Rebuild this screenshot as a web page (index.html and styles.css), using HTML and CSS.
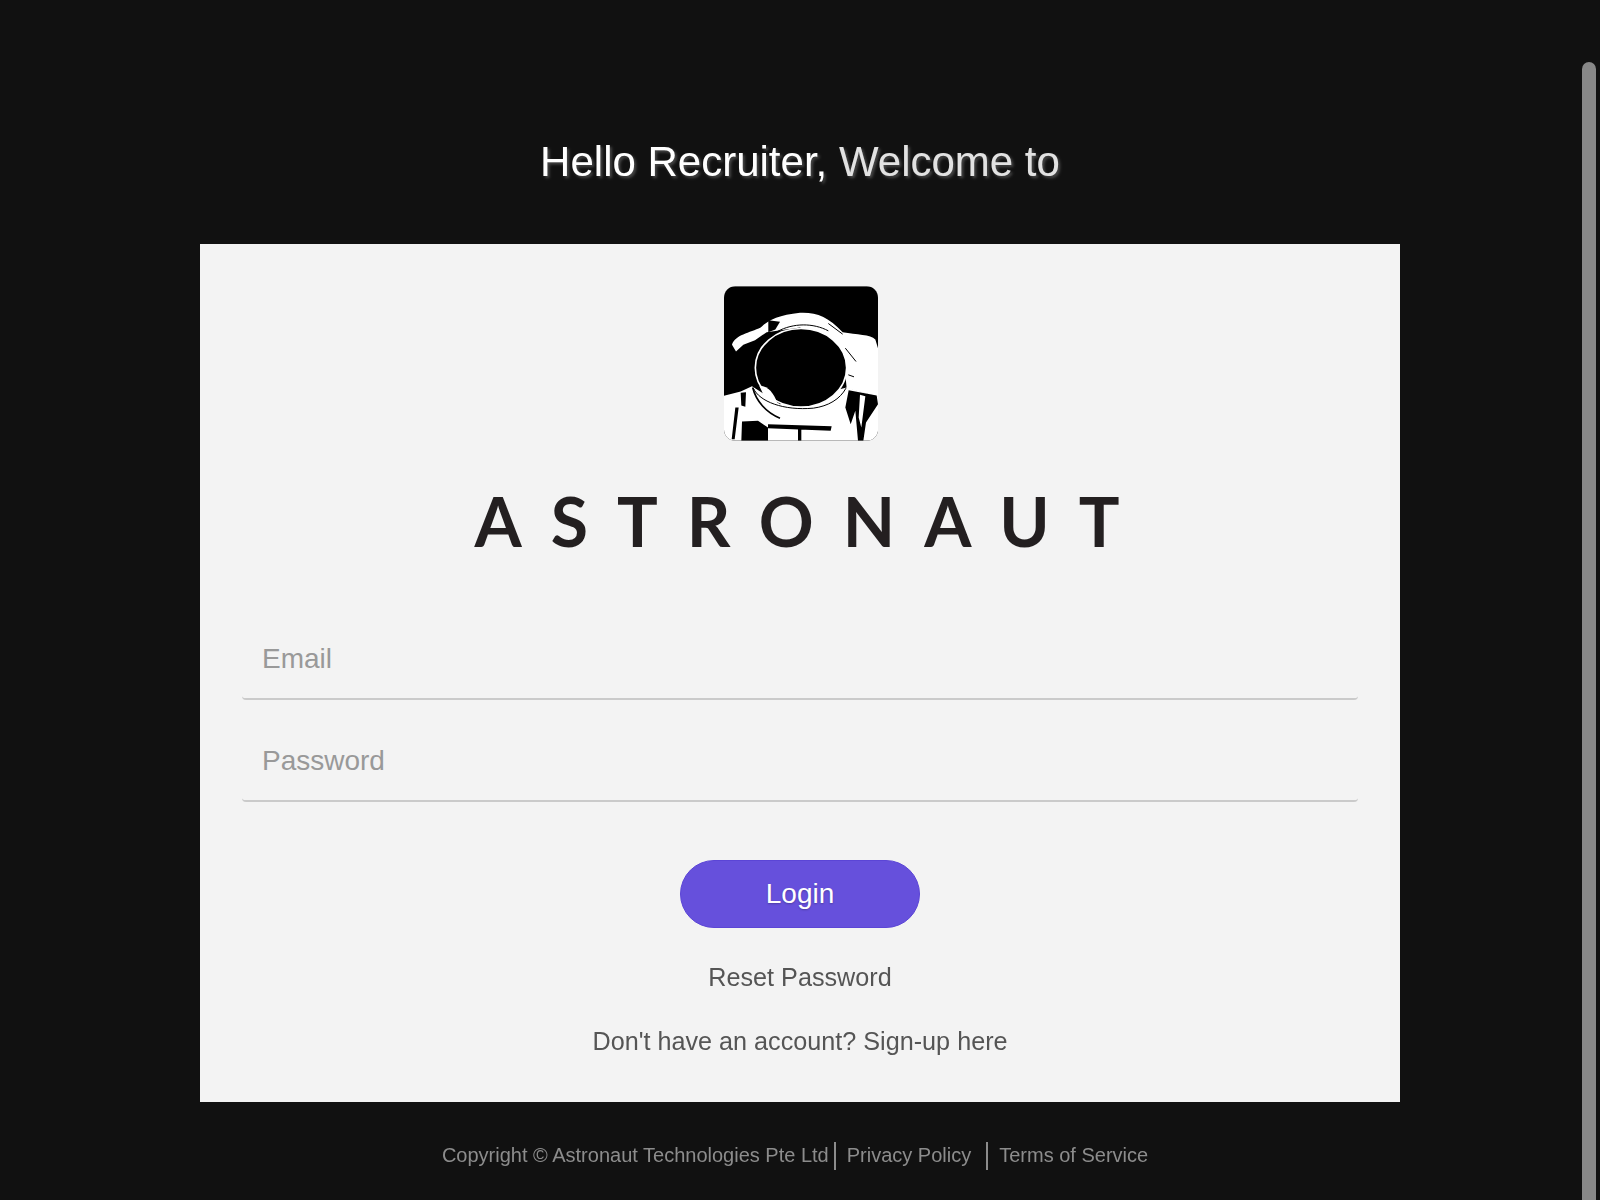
FILE: index.html
```html
<!DOCTYPE html>
<html lang="en">
<head>
<meta charset="utf-8">
<title>Astronaut Login</title>
<link rel="stylesheet" href="styles.css">
</head>
<body>
<main class="page">
  <h1 class="greeting"><span class="greeting-name">Hello Recruiter,</span> <span class="greeting-welcome">Welcome to</span></h1>
  <section class="card">
    <svg class="logo" viewBox="72 46 462 464" aria-label="Astronaut logo">
      <defs><clipPath id="logoClip"><rect x="72" y="46" width="462" height="464" rx="34"/></clipPath></defs>
      <g clip-path="url(#logoClip)">
        <rect x="72" y="46" width="462" height="464" fill="#000"/>
        <path fill="#fff" d="M96 222C104 192 150 186 182 170C208 146 240 132 300 126C350 124 384 138 428 184C470 192 512 190 526 206L534 232V378L500 368L440 352L430 250L300 170L200 184L165 208L130 222L108 242Z"/>
        <path fill="#fff" d="M72 375L122 362L156 346L240 400L440 350L534 376V510H72Z"/>
        <path fill="#000" d="M205 148L240 153L226 176L205 184Z"/>
        <ellipse cx="303" cy="291" rx="137" ry="118" fill="#000" stroke="#fff" stroke-width="5"/>
        <path fill="none" stroke="#000" stroke-width="3" d="M232 182C280 156 340 156 385 180M385 158L428 190M436 232L468 272M160 352C178 392 250 420 340 412C385 406 420 385 438 352M445 312L462 318"/>
        <path fill="#fff" d="M178 345C205 345 222 368 232 398L190 372Z"/>
        <path fill="none" stroke="#000" stroke-width="5" d="M158 350C168 390 198 425 240 442"/>
        <path fill="#000" d="M204 460L395 466L392 480L204 472ZM126 452L174 450L204 470V510H124ZM106 410L116 410L104 505L95 505ZM122 366L138 364L136 408L124 404ZM294 476H304V510H294ZM446 358L530 374L534 400L498 455L490 510H474L466 420L452 460L436 410Z"/>
        <path fill="#fff" d="M480 372L496 376L484 470L476 440ZM534 430V450L506 498L500 490ZM534 466V480L516 504L510 498Z"/>
      </g>
    </svg>
    <div class="wordmark">ASTRONAUT</div>
    <form class="login-form">
      <input class="field" type="email" placeholder="Email">
      <input class="field" type="password" placeholder="Password">
      <button class="login-button" type="button">Login</button>
    </form>
    <a class="card-link reset-link">Reset Password</a>
    <a class="card-link signup-link">Don't have an account? Sign-up here</a>
  </section>
  <footer class="footer">
    <span class="footer-item copyright">Copyright © Astronaut Technologies Pte Ltd</span>
    <a class="footer-item privacy">Privacy Policy</a>
    <a class="footer-item terms">Terms of Service</a>
  </footer>
</main>
<div class="scroll-thumb"></div>
</body>
</html>
```
FILE: styles.css
```css
* { box-sizing: border-box; }
html, body { margin: 0; height: 100%; overflow: hidden; }
body {
  background: #111;
  font-family: "Liberation Sans", Arial, sans-serif;
}
.page {
  display: flex;
  flex-direction: column;
  align-items: center;
  padding-top: 136px;
}
.greeting {
  margin: 0;
  height: 108px;
  font-size: 42px;
  line-height: 52px;
  font-weight: 400;
  text-shadow: 2px 2px 3px rgba(120,120,120,.55);
  filter: grayscale(1);
}
.greeting-name { color: #fff; }
.greeting-welcome { color: #e2e2e2; }
.card {
  width: 1200px;
  height: 858px;
  background: #f3f3f3;
  padding: 42px 42px 0;
  display: flex;
  flex-direction: column;
  align-items: center;
}
.logo { display: block; width: 154px; height: 155px; flex: none; margin-left: 2px; filter: blur(.4px); }
.wordmark {
  margin-top: 36px;
  height: 88px;
  font-family: Lato, "Liberation Sans", sans-serif;
  font-weight: 700;
  font-size: 68px;
  line-height: 88px;
  letter-spacing: 29px;
  margin-right: -23px;
  color: #231f20;
  filter: blur(.7px);
  white-space: nowrap;
}
.login-form {
  width: 100%;
  margin-top: 65px;
  display: flex;
  flex-direction: column;
  align-items: center;
  gap: 32px;
}
.field {
  width: 100%;
  height: 70px;
  border: 0;
  border-bottom: 2px solid #cacaca;
  border-radius: 0 0 4px 4px;
  background: transparent;
  padding: 0 20px 10px;
  font: 28px "Liberation Sans", Arial, sans-serif;
  outline: none;
}
.field::placeholder { color: #999; opacity: 1; }
.login-button {
  width: 240px;
  height: 68px;
  margin-top: 26px;
  border: 1px solid #5b45d6;
  border-radius: 34px;
  background: #6650dc;
  color: #fff;
  font: 28px "Liberation Sans", Arial, sans-serif;
  text-shadow: 0 1px 2px rgba(0,0,0,.25);
}
.card-link {
  color: #555;
  font-size: 25.2px;
  line-height: 32px;
  filter: grayscale(1);
}
.reset-link { margin-top: 33px; }
.signup-link { margin-top: 32px; }
.footer {
  margin-top: 40px;
  margin-right: 10px;
  display: flex;
  align-items: center;
  color: #8c8c8c;
  font-size: 20px;
  line-height: 26px;
  filter: grayscale(1);
}
.footer-item { padding: 0 11px 2px; }
.copyright { padding: 0 5px 2px 0; }
.privacy { border-left: 2px solid #8c8c8c; padding-right: 15px; }
.terms { border-left: 2px solid #8c8c8c; padding-right: 0; }
.scroll-thumb {
  position: fixed;
  top: 62px;
  right: 4px;
  bottom: 0;
  width: 14px;
  background: #888;
  border-radius: 7px 7px 0 0;
}
```
